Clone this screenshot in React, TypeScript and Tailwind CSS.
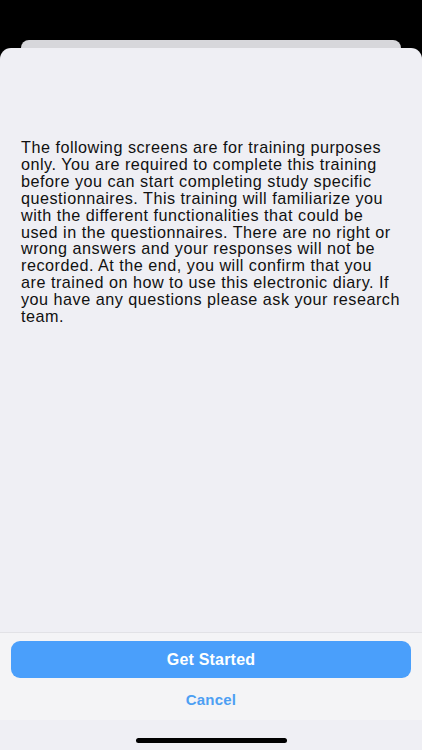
import React from "react";

const lines = [
  "The following screens are for training purposes",
  "only. You are required to complete this training",
  "before you can start completing study specific",
  "questionnaires. This training will familiarize you",
  "with the different functionalities that could be",
  "used in the questionnaires. There are no right or",
  "wrong answers and your responses will not be",
  "recorded. At the end, you will confirm that you",
  "are trained on how to use this electronic diary. If",
  "you have any questions please ask your research",
  "team.",
];

export default function App() {
  return (
    <div
      className="w-[422px] h-[750px] bg-black flex flex-col overflow-hidden"
      style={{ fontFamily: '"Liberation Sans", Arial, sans-serif' }}
    >
      <div className="h-[40px] shrink-0" />
      <div className="mx-[21px] h-[8px] shrink-0 bg-[#d7d7db] rounded-t-[10px]" />
      <div className="flex-1 flex flex-col bg-[#efeff4] rounded-t-[11px]">
        <div className="flex-1 pt-[91px] px-[21px]">
          <p className="text-[16.2px] leading-[16.9px] text-[#111] tracking-[0.5px]">
            {lines.map((l, i) => (
              <span key={i} className="block whitespace-nowrap">
                {l}
              </span>
            ))}
          </p>
        </div>
        <div className="h-[88px] bg-[#f4f4f6] border-t border-[#e2e2e6] flex flex-col items-center px-[11px] pt-[8px]">
          <button className="w-full h-[37px] rounded-[9px] bg-[#4a9ffb] text-white font-bold text-[16px] tracking-[0.2px]">
            Get Started
          </button>
          <button className="mt-[11px] text-[#4d9ff3] font-bold text-[15px] tracking-[0.2px]">
            Cancel
          </button>
        </div>
        <div className="h-[30px] flex items-start justify-center pt-[18px]">
          <div className="w-[151px] h-[5px] rounded-full bg-black" />
        </div>
      </div>
    </div>
  );
}
